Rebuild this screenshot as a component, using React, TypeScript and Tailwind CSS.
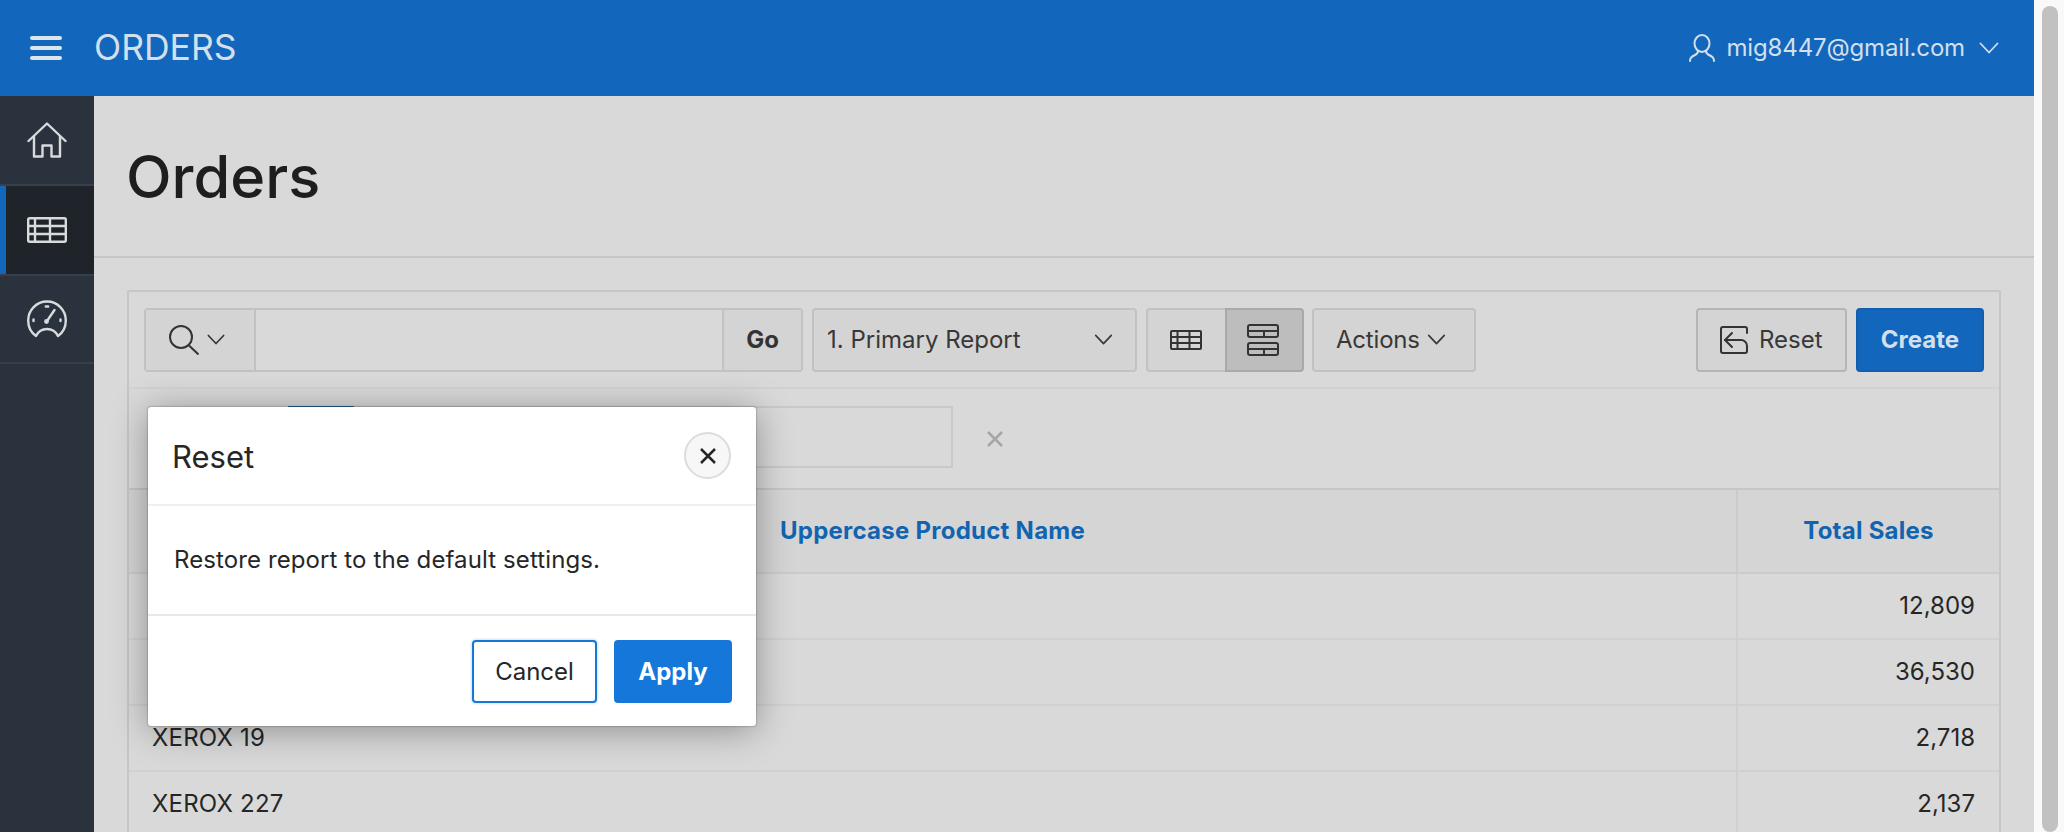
function Chevron({ className }: { className: string }) {
  return (
    <svg className={className} viewBox="0 0 20 12" fill="none" stroke="currentColor" strokeWidth="1.8" strokeLinecap="round" strokeLinejoin="round">
      <path d="M1.5 1.5 10 10.5l8.5-9" />
    </svg>
  );
}

function HomeIcon() {
  return (
    <svg className="w-10 h-[36px]" viewBox="0 0 40 36" fill="none" stroke="#d8dadc" strokeWidth="2.4">
      <path d="M1.500 19 20 1.500 38.500 19" strokeLinecap="round" strokeLinejoin="round" />
      <path d="M7 14v20.500h8.500V23.500h9v11H33V14" strokeLinejoin="round" />
    </svg>
  );
}

function GridIcon() {
  return (
    <svg className="w-10 h-[26px]" viewBox="0 0 40 26" fill="none" stroke="#d8dadc" strokeWidth="2.4">
      <rect x="1.200" y="1.200" width="37.600" height="23.600" rx="1.500" />
      <path d="M1 9h38M1 17h38M8 1v24M23 1v24" />
    </svg>
  );
}

function GaugeIcon() {
  return (
    <svg className="w-10 h-[38px]" viewBox="0 0 40 38" fill="none" stroke="#d8dadc" strokeWidth="2.400" strokeLinecap="round">
      <path d="M9 36C4 32.500 1.200 27 1.200 20.500 1.200 10 9.500 1.500 20 1.500S38.800 10 38.800 20.500c0 6.500-2.800 12-7.800 15.500-2.500-5-6.500-7-11-7s-8.500 2-11 7Z" strokeLinejoin="round" />
      <path d="M20 21 27.500 10" />
      <circle cx="19.500" cy="21.500" r="2.400" fill="#d8dadc" stroke="none" />
      <path d="M6.500 19.500v1.500M33.500 19.500v1.500M18.800 6.500h2.400" />
    </svg>
  );
}

function SearchIcon() {
  return (
    <svg className="w-[30px] h-[30px]" viewBox="0 0 30 30" fill="none" stroke="#333" strokeWidth="2">
      <circle cx="12" cy="12" r="11" />
      <path d="M20 20.500 29.500 29.500" />
    </svg>
  );
}

function ReportGridIcon() {
  return (
    <svg className="w-8 h-5" viewBox="0 0 32 20" fill="none" stroke="#333" strokeWidth="2">
      <rect x="1" y="1" width="30" height="18" rx="1" />
      <path d="M1 7h30M1 13h30M7.500 1v18M19.500 1v18" />
    </svg>
  );
}

function ReportRowsIcon() {
  return (
    <svg className="w-8 h-8" viewBox="0 0 32 32" fill="none" stroke="#333" strokeWidth="2">
      <rect x="1" y="1" width="30" height="12" rx="2" />
      <rect x="1" y="19" width="30" height="12" rx="2" />
      <path d="M1 7h30M1 25h30M17 7v6M17 25v6" />
    </svg>
  );
}

function ResetIcon() {
  return (
    <svg className="w-7 h-7" viewBox="0 0 28 28" fill="none" stroke="#333" strokeWidth="2" strokeLinecap="round" strokeLinejoin="round">
      <path d="M27 7V3a2 2 0 0 0-2-2H3a2 2 0 0 0-2 2v22a2 2 0 0 0 2 2h22a2 2 0 0 0 2-2v-5a6 6 0 0 0-6-6H5" />
      <path d="M12 7l-7 7 7 7" />
    </svg>
  );
}

function UserIcon() {
  return (
    <svg className="w-[26px] h-[28px]" viewBox="0 0 26 28" fill="none" stroke="#d3dfeb" strokeWidth="2" strokeLinecap="round">
      <ellipse cx="13" cy="9.500" rx="7.500" ry="8.500" />
      <path d="M9 17c0 2-1 3-3 4-3 1.500-5 2.500-5 6M17 17c0 2 1 3 3 4 3 1.500 5 2.500 5 6" />
    </svg>
  );
}

const rows = [
  { name: "", total: "12,809" },
  { name: "", total: "36,530" },
  { name: "XEROX 19", total: "2,718" },
  { name: "XEROX 227", total: "2,137" },
];

export default function App() {
  return (
    <div className="relative flex w-[2064px] h-[832px] overflow-hidden [font-family:Inter,sans-serif] text-[#262626]">
      <div className="flex flex-col w-[2034px] h-full">
        <header className="flex items-center shrink-0 h-24 bg-[#1267bd] text-[#d3dfeb]">
          <svg className="ml-[30px] w-8 h-6" viewBox="0 0 32 24" fill="#dde4ea">
            <rect x="0" y="0" width="32" height="4" rx="2" />
            <rect x="0" y="10" width="32" height="4" rx="2" />
            <rect x="0" y="20" width="32" height="4" rx="2" />
          </svg>
          <span className="ml-[32px] text-[35.5px] leading-none">ORDERS</span>
          <div className="flex items-center ml-auto mr-[34px]">
            <UserIcon />
            <span className="ml-[11px] text-2xl tracking-[-0.15px]">mig8447@gmail.com</span>
            <Chevron className="ml-[13px] w-[22px] h-3" />
          </div>
        </header>
        <div className="flex flex-1 min-h-0">
          <nav className="w-[94px] shrink-0 bg-[#2a333d]">
            <div className="flex items-center justify-center h-[90px] pr-[1px] border-b-2 border-[#37404a]">
              <HomeIcon />
            </div>
            <div className="flex items-center justify-center h-[88px] border-l-[6px] border-[#1267bd] bg-[#1f242b] pr-[7px]">
              <GridIcon />
            </div>
            <div className="flex items-center justify-center h-[90px] pr-[1px] border-t-2 border-b-2 border-[#37404a]">
              <GaugeIcon />
            </div>
          </nav>
          <main className="flex-1 min-w-0 bg-[#d9d9d9]">
            <div className="flex items-center h-[162px] pl-[32px] pt-[2px] border-b-2 border-[#c6c6c6]">
              <h1 className="text-[59.5px] font-medium leading-none text-[#1e1e1e]">Orders</h1>
            </div>
            <div className="px-[33px] pt-[32px]">
              <div className="border-2 border-[#c6c6c6] rounded-[2px]">
                <div className="flex items-center h-[97px] px-[15px] border-b-2 border-[#d2d2d2]">
                  <div className="flex w-[659px] h-16 border-2 border-[#c2c2c2] rounded-[4px]">
                    <div className="flex items-center w-[110px] pl-[23px] bg-[#d4d4d4] border-r-2 border-[#c2c2c2]">
                      <SearchIcon />
                      <Chevron className="ml-2 w-[18px] h-[11px] text-[#333]" />
                    </div>
                    <div className="flex-1" />
                    <div className="flex items-center justify-center w-[79px] bg-[#d4d4d4] border-l-2 border-[#c2c2c2] text-2xl font-bold text-[#333]">Go</div>
                  </div>
                  <div className="flex items-center w-[325px] h-16 ml-[9px] pl-[13px] pr-[22px] bg-[#d4d4d4] border-2 border-[#c2c2c2] rounded-[4px] text-2xl text-[#383838]">
                    <span>1. Primary Report</span>
                    <Chevron className="ml-auto w-[19px] h-[11px]" />
                  </div>
                  <div className="flex w-[158px] h-16 ml-[9px] rounded-[4px]">
                    <div className="flex items-center justify-center w-[79px] pr-[2px] bg-[#d4d4d4] border-2 border-r-0 border-[#c2c2c2] rounded-l-[4px]">
                      <ReportGridIcon />
                    </div>
                    <div className="flex items-center justify-center w-[79px] pr-[3px] bg-[#bdbdbd] border-2 border-[#a9a9a9] rounded-r-[4px]">
                      <ReportRowsIcon />
                    </div>
                  </div>
                  <div className="flex items-center w-[164px] h-16 ml-2 pl-[22px] bg-[#d4d4d4] border-2 border-[#c2c2c2] rounded-[4px] text-2xl text-[#383838]">
                    <span className="tracking-[-0.2px]">Actions</span>
                    <Chevron className="ml-[7px] w-[19px] h-[11px]" />
                  </div>
                  <div className="flex items-center w-[151px] h-16 ml-auto pl-[22px] bg-[#d4d4d4] border-2 border-[#b5b5b5] rounded-[4px] text-2xl text-[#383838]">
                    <ResetIcon />
                    <span className="ml-[11px]">Reset</span>
                  </div>
                  <div className="flex items-center justify-center w-32 h-16 ml-[9px] bg-[#1267bd] border-2 border-[#115fae] rounded-[4px] text-2xl font-bold text-[#d3dfeb]">Create</div>
                </div>
                <div className="flex items-center h-[101px] pl-[159px] border-b-2 border-[#c6c6c6]">
                  <div className="w-[66px] h-[62px] border-t-2 border-[#2c6490] mb-[3px]" />
                  <div className="w-[599px] h-[62px] border-2 border-l-0 border-[#c9c9c9] mb-[3px]" />
                  <svg className="ml-[33px] w-[18px] h-[18px]" viewBox="0 0 18 18" stroke="#a6a6a6" strokeWidth="2.500">
                    <path d="M2 2l14 14M16 2 2 16" />
                  </svg>
                </div>
                <div className="grid grid-cols-[1607px_1fr]">
                  <div className="flex items-center justify-center h-[84px] bg-[#d5d5d5] border-b-2 border-[#cbcbcb] text-2xl font-bold tracking-[0.25px] text-[#1264b0]">
                    Uppercase Product Name
                  </div>
                  <div className="flex items-center justify-center h-[84px] bg-[#d5d5d5] border-b-2 border-l-2 border-[#cbcbcb] text-2xl font-bold tracking-[0.25px] text-[#1264b0]">
                    Total Sales
                  </div>
                  {rows.map((row) => (
                    <div key={row.total} className="contents">
                      <div className="flex items-center h-[66px] pl-[23px] border-b-2 border-[#d0d0d0] text-2xl tracking-[0.2px]">{row.name}</div>
                      <div className="flex items-center justify-end h-[66px] pr-[24px] border-b-2 border-l-2 border-[#d0d0d0] text-2xl">{row.total}</div>
                    </div>
                  ))}
                </div>
              </div>
            </div>
          </main>
        </div>
      </div>
      <div className="flex-1 bg-[#f9f9f9] pt-[6px] pl-2">
        <div className="w-4 h-full rounded-full bg-[#c1c1c1]" />
      </div>

      <div className="absolute left-[148px] top-[407px] flex flex-col w-[608px] h-[319px] bg-white rounded-[3px] shadow-[0_4px_36px_rgba(0,0,0,0.35),0_0_2px_rgba(0,0,0,0.5)]">
        <div className="flex items-center justify-between h-[99px] pl-[24px] pr-[25px] border-b-2 border-[#efefef]">
          <h2 className="pt-[3px] text-[31px] text-[#262626]">Reset</h2>
          <button className="flex items-center justify-center w-[47px] h-[47px] rounded-full bg-[#f7f7f7] border-2 border-[#dcdcdc]">
            <svg className="w-[18px] h-[18px]" viewBox="0 0 18 18" stroke="#262626" strokeWidth="2.500">
              <path d="M2 2l14 14M16 2 2 16" />
            </svg>
          </button>
        </div>
        <div className="flex items-center h-[110px] pl-[26px] border-b-2 border-[#e8e8e8] text-2xl tracking-[0.1px]">
          Restore report to the default settings.
        </div>
        <div className="flex justify-end gap-[17px] pt-[24px] pr-[24px]">
          <button className="w-[125px] h-[63px] bg-white border-2 border-[#1577d9] rounded-[4px] text-2xl shadow-[0_0_3px_rgba(21,119,217,0.4)]">Cancel</button>
          <button className="w-[118px] h-[63px] bg-[#1577d9] rounded-[4px] text-2xl font-bold text-white">Apply</button>
        </div>
      </div>
    </div>
  );
}
